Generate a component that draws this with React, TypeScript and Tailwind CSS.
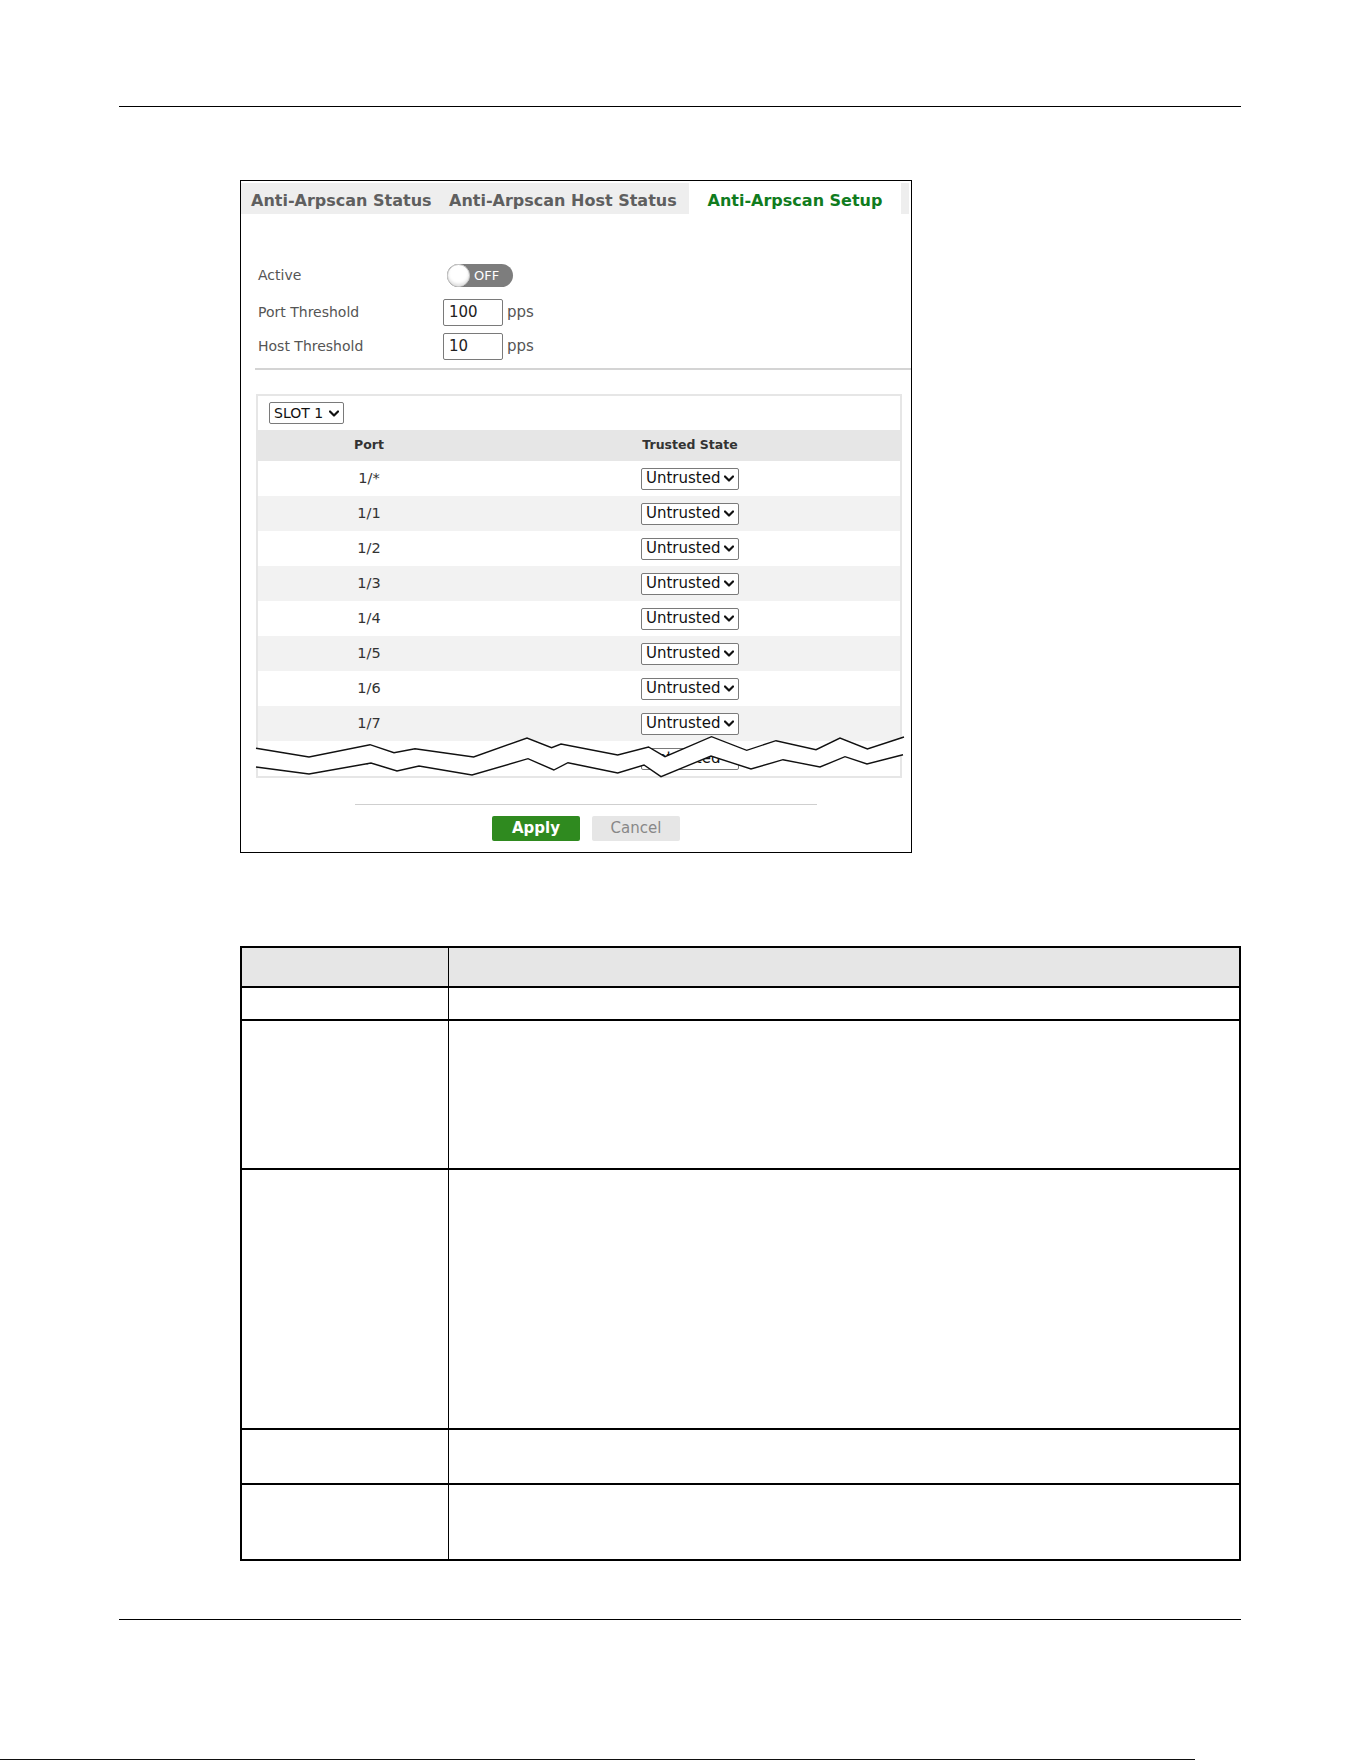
import { ReactNode } from 'react';

const ports = ['1/*', '1/1', '1/2', '1/3', '1/4', '1/5', '1/6', '1/7', '1/8'];

// torn-edge break drawn across the bottom of the port table
const upperEdge: [number, number][] = [
  [0, 17.3], [53, 26], [114, 13.7], [138, 21.7], [159, 17.7], [217.6, 26], [271, 7],
  [295.6, 16.7], [305, 13], [361.7, 24], [392.5, 16], [409, 25.7], [455.5, 5.7],
  [490.7, 19.3], [520, 9.7], [560, 18.7], [584, 7], [611.4, 18], [648, 6],
];
const lowerEdge: [number, number][] = [
  [0, 36], [53, 43], [115, 32], [141, 40], [163, 35], [216, 44], [272, 27.7],
  [297.8, 39], [312, 31.7], [361.7, 42], [388, 34], [405, 45.7], [455, 25],
  [495, 38], [527, 28.7], [564, 36], [589, 25.7], [611, 33], [647, 23.7],
];
const toPts = (pts: [number, number][]) => pts.map(([x, y]) => `${x},${y}`).join(' ');

// description table row heights (each includes its bottom rule)
const descRows = ['h-[33px]', 'h-[149px]', 'h-[260px]', 'h-[55px]', 'h-[74px]'];

function Chevron() {
  return (
    <svg width="10" height="7" viewBox="0 0 10 7" className="shrink-0">
      <polyline points="1,1.5 5,5.5 9,1.5" fill="none" stroke="#111" strokeWidth="2.2" strokeLinejoin="round" strokeLinecap="round" />
    </svg>
  );
}

function Select({ children, width, size }: { children: ReactNode; width: string; size: string }) {
  return (
    <div className={`${width} ${size} h-[22px] flex items-center justify-between pl-[4px] pr-[4px] border border-[#7a7a7a] rounded-[2px] bg-white leading-none text-[#111]`}>
      <span>{children}</span>
      <Chevron />
    </div>
  );
}

function FormRow({ label, height, children }: { label: string; height: string; children: ReactNode }) {
  return (
    <div className={`flex items-center ${height}`}>
      <div className="w-[185px] text-[14px] text-[#555]">{label}</div>
      {children}
    </div>
  );
}

function Threshold({ value }: { value: string }) {
  return (
    <>
      <div className="w-[60px] h-[27px] flex items-center pl-[5px] border border-[#7a7a7a] rounded-[2px] text-[15px] text-[#222]">
        {value}
      </div>
      <span className="ml-[4px] text-[15px] text-[#555]">pps</span>
    </>
  );
}

export default function App() {
  return (
    <div className="relative w-[1361px] h-[1761px] bg-white overflow-hidden font-['DejaVu_Sans',sans-serif]">
      <div className="pt-[106px]">
        <div className="ml-[119px] w-[1122px] h-px bg-black" />

        {/* setup panel */}
        <div className="ml-[240px] mt-[73px] w-[672px] border border-black">
          <div className="mt-[2px] mr-[2px] h-[31px] flex bg-[#eeeeee] text-[16px] font-bold">
            <div className="w-[196px] pl-[10px] pt-[5px] flex items-center text-[#5f5f5f] whitespace-nowrap">Anti-Arpscan Status</div>
            <div className="w-[252px] pl-[12px] pt-[5px] flex items-center text-[#5f5f5f] whitespace-nowrap">Anti-Arpscan Host Status</div>
            <div className="w-[212px] -mt-px pt-[6px] flex items-center justify-center bg-white text-[#107c1e] whitespace-nowrap">Anti-Arpscan Setup</div>
          </div>

          <div className="pt-[44px] pl-[17px]">
            <FormRow label="Active" height="h-[35px]">
              <div className="relative ml-[4px] w-[66px] h-[23px] rounded-full bg-[#7d7d7d] flex items-center">
                <div className="absolute left-0 top-0 w-[23px] h-[23px] rounded-full bg-white border border-[#c8c8c8] shadow-[inset_0_-2px_3px_rgba(0,0,0,0.12)]" />
                <span className="ml-[27px] text-[13px] text-white">OFF</span>
              </div>
            </FormRow>
            <FormRow label="Port Threshold" height="h-[38px]">
              <Threshold value="100" />
            </FormRow>
            <FormRow label="Host Threshold" height="h-[30px]">
              <Threshold value="10" />
            </FormRow>
          </div>

          <div className="mt-[7px] ml-[14px] h-[2px] bg-[#d4d4d4]" />

          {/* port table */}
          <div className="relative ml-[15px] mt-[24px] w-[646px] border-2 border-[#e6e6e6]">
            <div className="pt-[6px] pb-[6px] pl-[11px]">
              <Select width="w-[75px]" size="text-[14px]">SLOT 1</Select>
            </div>
            <div className="flex h-[31px] items-center bg-[#e6e6e6] text-[12.5px] font-bold text-[#333]">
              <div className="w-[222px] text-center">Port</div>
              <div className="flex-1 text-center">Trusted State</div>
            </div>
            {ports.map((p, i) => (
              <div key={p} className={`flex h-[35px] items-center ${i % 2 === 1 ? 'bg-[#f2f2f2]' : 'bg-white'}`}>
                <div className="w-[222px] text-center text-[14.5px] text-[#333]">{p}</div>
                <div className="flex-1 flex justify-center">
                  <Select width="w-[98px]" size="text-[15px]">Untrusted</Select>
                </div>
              </div>
            ))}
            <svg className="absolute left-[-2px] top-[335px] overflow-visible" width="650" height="50" viewBox="0 0 650 50">
              <polygon points={toPts([...upperEdge, ...[...lowerEdge].reverse()])} fill="white" />
              <polyline points={toPts(upperEdge)} fill="none" stroke="#111" strokeWidth="1.4" />
              <polyline points={toPts(lowerEdge)} fill="none" stroke="#111" strokeWidth="1.4" />
            </svg>
          </div>

          <div className="mt-[26px] ml-[114px] w-[462px] h-px bg-[#cfcfcf]" />
          <div className="mt-[11px] mb-[11px] ml-[251px] flex gap-[12px]">
            <div className="w-[88px] h-[25px] flex items-center justify-center rounded-[2px] bg-[#2f8a1f] text-[15px] font-bold text-white">Apply</div>
            <div className="w-[88px] h-[25px] flex items-center justify-center rounded-[2px] bg-[#e6e6e6] text-[15px] text-[#888]">Cancel</div>
          </div>
        </div>

        {/* field description table */}
        <div className="ml-[240px] mt-[93px] w-[1001px] border-2 border-black">
          <div className="flex h-[40px] bg-[#e6e6e6] border-b-2 border-black">
            <div className="w-[207px] border-r border-black" />
            <div className="flex-1" />
          </div>
          {descRows.map((h, i) => (
            <div key={h} className={`flex ${h} ${i < descRows.length - 1 ? 'border-b-2 border-black' : ''}`}>
              <div className="w-[207px] border-r border-black" />
              <div className="flex-1" />
            </div>
          ))}
        </div>

        <div className="ml-[119px] mt-[58px] w-[1122px] h-px bg-black" />
        <div className="mt-[139px] w-[1195px] h-px bg-[#111]" />
      </div>
    </div>
  );
}
